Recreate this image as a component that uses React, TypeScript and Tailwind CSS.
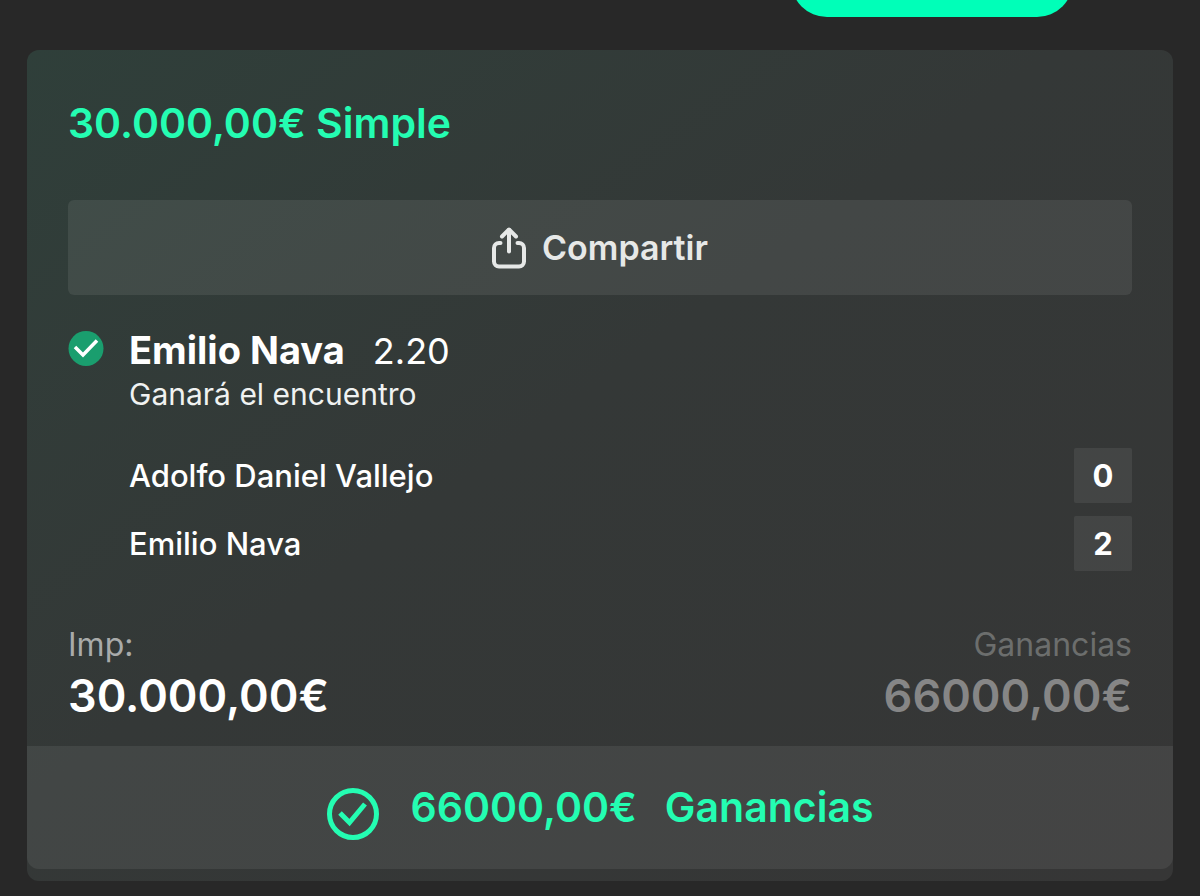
type Jugador = {
  nombre: string;
  sets: number;
};

const jugadores: Jugador[] = [
  { nombre: "Adolfo Daniel Vallejo", sets: 0 },
  { nombre: "Emilio Nava", sets: 2 },
];

function ShareIcon() {
  return (
    <svg
      className="h-[42px] w-[34px] shrink-0"
      viewBox="0 0 34 42"
      fill="none"
      stroke="currentColor"
      strokeWidth="4"
      strokeLinecap="round"
      strokeLinejoin="round"
      aria-hidden="true"
    >
      <path d="M8.500 16H7a5 5 0 0 0-5 5v13.500a5 5 0 0 0 5 5h20a5 5 0 0 0 5-5V21a5 5 0 0 0-5-5h-1.500" />
      <path d="M17 24.500V3" />
      <path d="M10 9.500l7-7 7 7" />
    </svg>
  );
}

function SelectionIcon() {
  return (
    <svg className="mt-1 h-9 w-9 shrink-0" viewBox="0 0 36 36" fill="none" aria-hidden="true">
      <circle cx="18" cy="17.500" r="17.500" fill="#1a9e6e" />
      <path d="M7 16l8 8L29 9.500" stroke="currentColor" strokeWidth="3.500" />
    </svg>
  );
}

function WonIcon() {
  return (
    <svg className="mt-3 h-[52px] w-[52px] shrink-0" viewBox="0 0 52 52" fill="none" stroke="currentColor" aria-hidden="true">
      <circle cx="26" cy="26" r="23.500" strokeWidth="5" />
      <path d="M13 25l9.500 9.500L38 16" strokeWidth="5" />
    </svg>
  );
}

export default function App() {
  return (
    <div className="min-h-screen bg-[#282828] font-['Inter',sans-serif] text-white">
      <header className="flex h-[17px] items-end justify-end overflow-hidden pr-[127px]">
        <button type="button" aria-label="Resueltas" className="h-[72px] w-[282px] shrink-0 rounded-full bg-[#00ffb8]" />
      </header>

      <main className="px-[27px] pt-[33px]">
        <article className="overflow-hidden rounded-xl bg-linear-to-br from-[#2f3f3a] via-[#343837] via-45% to-[#363636] pb-3">
          <div className="px-[41px] pt-12">
            <h2 className="text-[41px] leading-[50px] font-semibold text-[#24fdb2]">30.000,00€ Simple</h2>

            <button
              type="button"
              className="mt-[52px] flex h-[95px] w-full items-center justify-center gap-4 rounded-md bg-white/8 text-[34px] font-semibold text-[#e6e8e7]"
            >
              <ShareIcon />
              Compartir
            </button>

            <section className="mt-8 flex gap-[25px]">
              <SelectionIcon />
              <div className="flex-1">
                <div className="flex items-baseline gap-7 text-[38px] leading-[46px]">
                  <h3 className="font-bold">Emilio Nava</h3>
                  <span className="text-[36px] font-normal">2.20</span>
                </div>
                <p className="text-[30px] leading-[40px] font-normal text-[#f0f2f1]">Ganará el encuentro</p>

                <ul className="mt-[34px] flex flex-col gap-[13px]">
                  {jugadores.map(j => (
                    <li key={j.nombre} className="flex items-center justify-between text-[31px] leading-[36px] font-medium">
                      <span>{j.nombre}</span>
                      <span className="flex h-[55px] w-[58px] items-center justify-center rounded-xs bg-white/7 font-bold">
                        {j.sets}
                      </span>
                    </li>
                  ))}
                </ul>
              </div>
            </section>

            <dl className="mt-[52px] flex justify-between pb-[21px]">
              <div>
                <dt className="text-[32px] leading-[44px] font-normal text-[#a9abaa]">Imp:</dt>
                <dd className="text-[45px] leading-[58px] font-semibold">30.000,00€</dd>
              </div>
              <div className="text-right">
                <dt className="text-[32px] leading-[44px] font-normal text-[#6c6e6d]">Ganancias</dt>
                <dd className="text-[45px] leading-[58px] font-semibold text-[#868686]">66000,00€</dd>
              </div>
            </dl>
          </div>

          <footer className="flex h-[123px] items-center justify-center gap-8 rounded-b-xl bg-white/7 text-[41px] font-semibold text-[#24fdb2]">
            <WonIcon />
            <p className="flex gap-7">
              <span>66000,00€</span>
              <span>Ganancias</span>
            </p>
          </footer>
        </article>
      </main>
    </div>
  );
}
